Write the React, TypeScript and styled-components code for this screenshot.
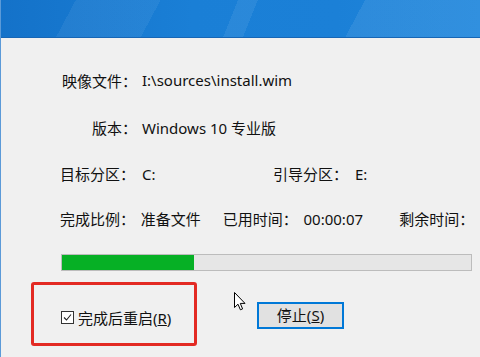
import React from "react";
import styled, { createGlobalStyle } from "styled-components";

const GlobalStyle = createGlobalStyle`
  html, body {
    margin: 0;
    padding: 0;
    background: #f0f0f0;
  }
  body {
    font-family: "Noto Sans", "Noto Sans CJK SC", sans-serif;
    color: #111;
  }
`;

const Window = styled.div`
  position: relative;
  width: 480px;
  height: 357px;
  overflow: hidden;
  background: #f0f0f0;
  border-left: 1px solid #5b9ad8;
  box-sizing: border-box;
`;

const TitleBar = styled.div`
  height: 37px;
  border-bottom: 1px solid #1766b5;
  background:
    linear-gradient(112deg, transparent 0 48%, rgba(255, 255, 255, 0.07) 48% 52%, transparent 52%),
    linear-gradient(118deg, transparent 0 15%, rgba(255, 255, 255, 0.06) 15% 32%, transparent 32% 73%, rgba(255, 255, 255, 0.08) 73%),
    linear-gradient(90deg, #1472c9 0%, #1a7fd6 40%, #1b80d7 70%, #2087dc 100%);
`;

const Body = styled.div`
  padding: 19px 0 0 59px;
  font-size: 15px;
`;

const Row = styled.div<{ $h?: number }>`
  display: flex;
  align-items: center;
  height: ${(p) => p.$h ?? 45}px;
  white-space: nowrap;
`;

const Label = styled.span<{ $right?: boolean }>`
  display: inline-block;
  width: 82px;
  text-align: ${(p) => (p.$right ? "right" : "left")};
  padding-right: ${(p) => (p.$right ? 5 : 0)}px;
  box-sizing: border-box;
`;

const Value = styled.span<{ $w?: number }>`
  display: inline-block;
  width: ${(p) => (p.$w ? `${p.$w}px` : "auto")};
`;

const Progress = styled.div`
  margin: 13px 8px 0 1px;
  height: 15px;
  border: 1px solid #bcbcbc;
  background: #e6e6e6;
`;

const Fill = styled.div`
  height: 100%;
  background: #06b025;
`;

const Footer = styled.div`
  display: flex;
  align-items: flex-start;
  margin-top: 11px;
  margin-left: -29px;
`;

const Highlight = styled.div`
  width: 166px;
  height: 64px;
  border: 3px solid #e32a23;
  border-radius: 3px;
  display: flex;
  align-items: center;
  padding: 6px 0 0 27px;
  box-sizing: border-box;
`;

const Check = styled.label`
  display: flex;
  align-items: center;
  gap: 4px;
`;

const Box = styled.span`
  width: 11px;
  height: 11px;
  border: 1px solid #333;
  background: #fff;
  display: flex;
  align-items: center;
  justify-content: center;
`;

const Button = styled.button`
  margin-left: 60px;
  margin-top: 20px;
  width: 87px;
  height: 27px;
  border: 2px solid #0078d7;
  background: #e1e1e1;
  font-family: "Noto Sans", "Noto Sans CJK SC", sans-serif;
  font-size: 15px;
  line-height: 1;
  color: #111;
  padding: 0;
`;

const Cursor = styled.svg`
  position: absolute;
  left: 233px;
  top: 292px;
`;

export default function App() {
  return (
    <Window>
      <GlobalStyle />
      <TitleBar />
      <Body>
        <Row $h={46}>
          <Label $right>映像文件：</Label>
          <Value>I:\sources\install.wim</Value>
        </Row>
        <Row $h={48}>
          <Label $right>版本：</Label>
          <Value>Windows 10 专业版</Value>
        </Row>
        <Row>
          <Label>目标分区：</Label>
          <Value $w={131}>C:</Value>
          <Label>引导分区：</Label>
          <Value>E:</Value>
        </Row>
        <Row>
          <Label>完成比例：</Label>
          <Value $w={83}>准备文件</Value>
          <Label>已用时间：</Label>
          <Value $w={97}>00:00:07</Value>
          <Label>剩余时间：</Label>
        </Row>
        <Progress>
          <Fill style={{ width: `${(132 / 410) * 100}%` }} />
        </Progress>
        <Footer>
          <Highlight>
            <Check>
              <Box>
                <svg width="9" height="9" viewBox="0 0 9 9">
                  <path d="M1 4.5 L3.5 7 L8 1.5" fill="none" stroke="#222" strokeWidth="1.1" />
                </svg>
              </Box>
              <span>
                完成后重启(<u>R</u>)
              </span>
            </Check>
          </Highlight>
          <Button>
            停止(<u>S</u>)
          </Button>
        </Footer>
      </Body>
      <Cursor width="12" height="19" viewBox="0 0 12 19">
        <path
          d="M0.5 0.5 L0.5 15.5 L4 12.2 L6.4 17.8 L8.6 16.9 L6.3 11.4 L11 11.4 Z"
          fill="#fff"
          stroke="#000"
          strokeWidth="1"
          strokeLinejoin="miter"
        />
      </Cursor>
    </Window>
  );
}
